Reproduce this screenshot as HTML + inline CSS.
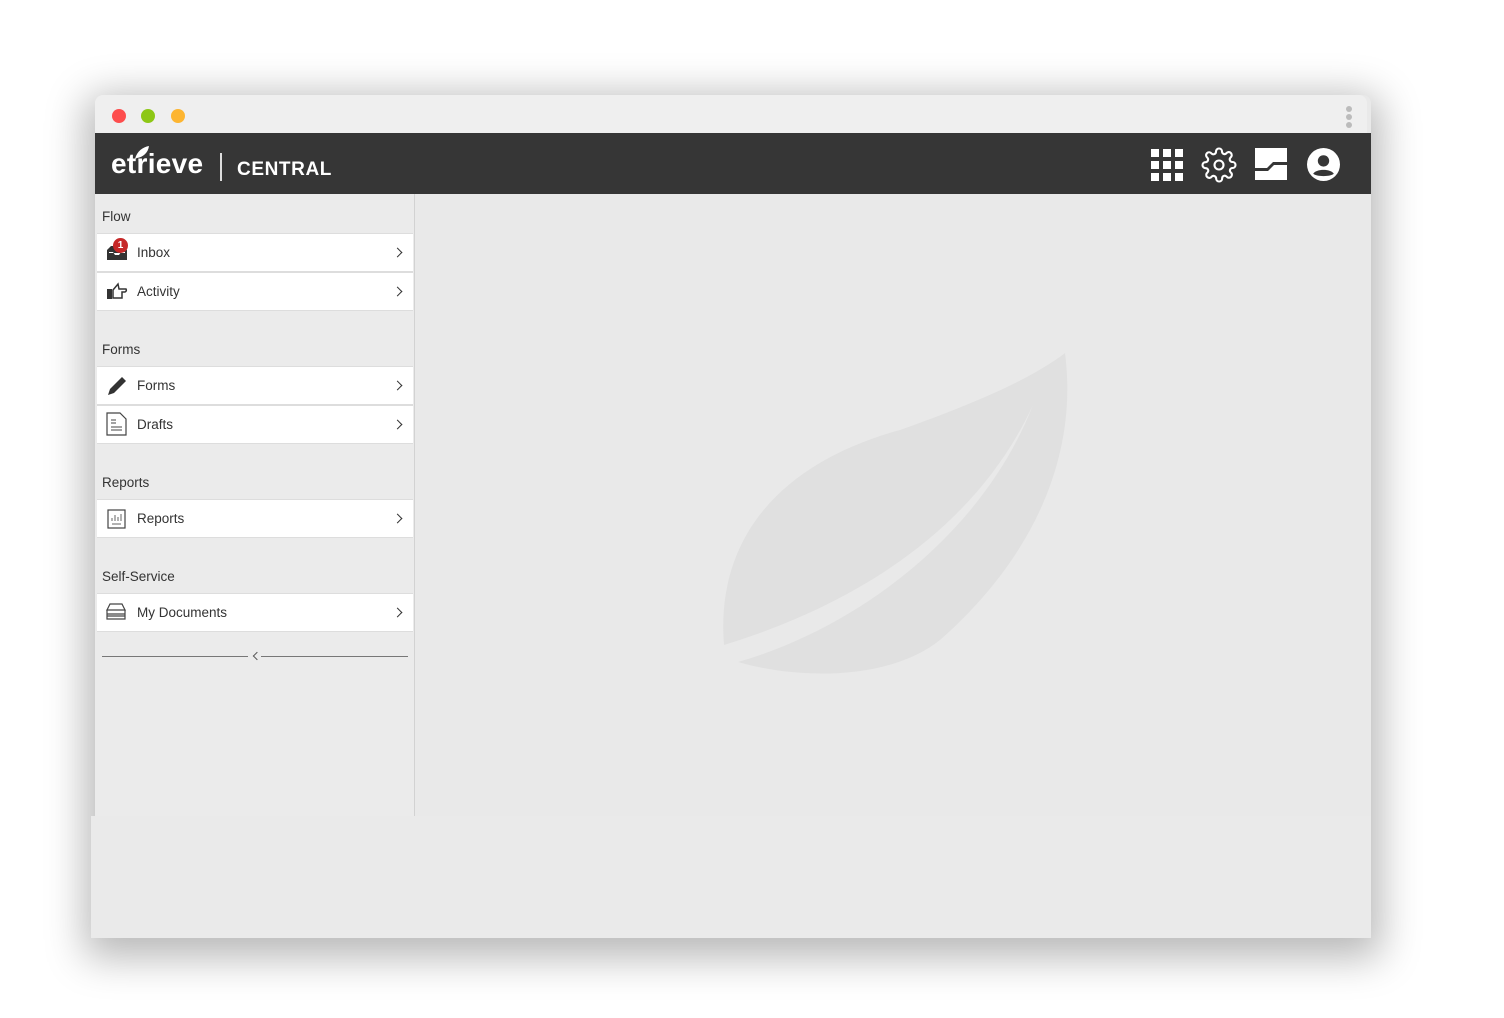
<!DOCTYPE html>
<html><head><meta charset="utf-8"><style>
*{margin:0;padding:0;box-sizing:border-box}
body{width:1504px;height:1018px;background:#fff;position:relative;overflow:hidden;font-family:"Liberation Sans",Arial,sans-serif}
.win{position:absolute;left:95px;top:95px;width:1276px;height:843px;box-shadow:0 10px 40px 10px rgba(0,0,0,.28);border-radius:8px 8px 0 0;background:#e9e9e9}
.bot{position:absolute;left:91px;top:816px;width:1280px;height:122px;background:#eaeaea}
.title{position:absolute;left:95px;top:95px;width:1272px;height:38px;background:#efefef;border-radius:8px 8px 0 0}
.dot{position:absolute;top:109px;width:14px;height:14px;border-radius:50%}
.hdr{position:absolute;left:95px;top:133px;width:1276px;height:61px;background:#363636;color:#fff}
.side{position:absolute;left:95px;top:194px;width:320px;height:622px;background:#ebebeb;border-right:1px solid #d2d2d2}
.sec{position:absolute;left:102px;font-size:13.5px;color:#333}
.row{position:absolute;left:97px;width:316px;height:39px;background:#fff;border-top:1px solid #ddd;border-bottom:1px solid #ddd}
.row span{position:absolute;left:40px;top:11px;font-size:13.5px;color:#333}
.row .ch{position:absolute;right:12px;top:15px;width:7px;height:7px;border-right:1.6px solid #333;border-top:1.6px solid #333;transform:rotate(45deg)}
.row svg{position:absolute;left:9px;top:8px}
</style></head><body>
<div class="win"></div>
<div class="bot"></div>
<div class="title"></div>
<div class="dot" style="left:112px;background:#fd4d4d"></div>
<div class="dot" style="left:141px;background:#8dc715"></div>
<div class="dot" style="left:171px;background:#fdb531"></div>
<div style="position:absolute;left:1346px;top:106px;width:6px;height:22px">
<div style="width:6px;height:6px;border-radius:50%;background:#bbb;margin-bottom:2px"></div><div style="width:6px;height:6px;border-radius:50%;background:#bbb;margin-bottom:2px"></div><div style="width:6px;height:6px;border-radius:50%;background:#bbb"></div></div>
<div class="hdr">
<div style="position:absolute;left:16px;top:15px;font-size:28px;font-weight:bold;letter-spacing:0.3px">etrieve</div>
<svg style="position:absolute;left:38px;top:12px" width="18" height="16"><path d="M2 14C4 6 10 2 16 1C15 8 10 12 4 13Z" fill="#fff"/></svg>
<div style="position:absolute;left:125px;top:20px;width:1.5px;height:28px;background:#ddd"></div>
<div style="position:absolute;left:142px;top:26px;font-size:19px;letter-spacing:0.6px;font-weight:bold">CENTRAL</div>
<svg style="position:absolute;left:1056px;top:16px" width="32" height="32" fill="#fff"><rect x="0" y="0" width="8" height="8"/><rect x="12" y="0" width="8" height="8"/><rect x="24" y="0" width="8" height="8"/><rect x="0" y="12" width="8" height="8"/><rect x="12" y="12" width="8" height="8"/><rect x="24" y="12" width="8" height="8"/><rect x="0" y="24" width="8" height="8"/><rect x="12" y="24" width="8" height="8"/><rect x="24" y="24" width="8" height="8"/></svg>
<svg style="position:absolute;left:1106px;top:14px" width="36" height="36" viewBox="0 0 24 24" fill="none" stroke="#fff" stroke-width="1.4"><circle cx="12" cy="12" r="3"/><path d="M19.4 15a1.7 1.7 0 0 0 .3 1.8l.1.1a2 2 0 1 1-2.8 2.8l-.1-.1a1.7 1.7 0 0 0-1.8-.3 1.7 1.7 0 0 0-1 1.5V21a2 2 0 1 1-4 0v-.1a1.7 1.7 0 0 0-1.1-1.5 1.7 1.7 0 0 0-1.8.3l-.1.1a2 2 0 1 1-2.8-2.8l.1-.1a1.7 1.7 0 0 0 .3-1.8 1.7 1.7 0 0 0-1.5-1H3a2 2 0 1 1 0-4h.1a1.7 1.7 0 0 0 1.5-1.1 1.7 1.7 0 0 0-.3-1.8l-.1-.1a2 2 0 1 1 2.8-2.8l.1.1a1.7 1.7 0 0 0 1.8.3H9a1.7 1.7 0 0 0 1-1.5V3a2 2 0 1 1 4 0v.1a1.7 1.7 0 0 0 1 1.5 1.7 1.7 0 0 0 1.8-.3l.1-.1a2 2 0 1 1 2.8 2.8l-.1.1a1.7 1.7 0 0 0-.3 1.8V9a1.7 1.7 0 0 0 1.5 1H21a2 2 0 1 1 0 4h-.1a1.7 1.7 0 0 0-1.5 1z"/></svg>
<svg style="position:absolute;left:1160px;top:15px" width="32" height="32"><path d="M0 0H32V14H18L12 20H0Z" fill="#fff"/><path d="M0 23H13L19 17H32V32H0Z" fill="#fff"/></svg>
<svg style="position:absolute;left:1212px;top:15px" width="33" height="33" viewBox="0 0 32 32"><circle cx="16" cy="16" r="16" fill="#fff"/><circle cx="16" cy="12.5" r="5.5" fill="#363636"/><path d="M6 25C9 20 23 20 26 25C23 28 9 28 6 25Z" fill="#363636"/></svg>
</div>
<div class="side"></div>
<div class="sec" style="top:209px">Flow</div>
<div class="row" style="top:233px"><svg width="22" height="20"><path d="M1 8L5 4H17L21 8V18H1Z" fill="#333"/><path d="M3 10H7L9 13H13L15 10H19V11H3Z" fill="#fff"/></svg><div style="position:absolute;left:16px;top:4px;width:15px;height:15px;border-radius:50%;background:#c62828;color:#fff;font-size:10px;text-align:center;line-height:15px;font-weight:bold">1</div><span>Inbox</span><i class="ch"></i></div>
<div class="row" style="top:272px"><svg width="22" height="20"><rect x="1" y="8" width="5" height="10" fill="#333"/><path d="M7 9L12 3L13 8H20Q21 10 19 11H16V17H7Z" fill="none" stroke="#333" stroke-width="1.5"/></svg><span>Activity</span><i class="ch"></i></div>
<div class="sec" style="top:342px">Forms</div>
<div class="row" style="top:366px"><svg width="22" height="22"><path d="M2 20L4 14L16 2L20 6L8 18Z" fill="#333"/></svg><span>Forms</span><i class="ch"></i></div>
<div class="row" style="top:405px"><svg width="22" height="24" style="top:6px"><path d="M1 1H14L20 7V23H1Z" fill="none" stroke="#444" stroke-width="1.2"/><path d="M5 8H10M5 11H10M5 15H16M5 18H16" stroke="#444"/></svg><span>Drafts</span><i class="ch"></i></div>
<div class="sec" style="top:475px">Reports</div>
<div class="row" style="top:499px"><svg width="22" height="22"><rect x="2" y="2" width="17" height="18" fill="none" stroke="#444" stroke-width="1.2"/><path d="M6 13V10M9 13V7M12 13V9M15 13V6M6 16H15" stroke="#666"/></svg><span>Reports</span><i class="ch"></i></div>
<div class="sec" style="top:569px">Self-Service</div>
<div class="row" style="top:593px"><svg width="22" height="20"><path d="M4 2H16L19 8H1Z M1 8H19V12H1Z M1 12H19V17H1Z M1 14H19" fill="none" stroke="#444" stroke-width="1.2"/></svg><span>My Documents</span><i class="ch"></i></div>
<div style="position:absolute;left:102px;top:656px;width:146px;height:1px;background:#777"></div>
<div style="position:absolute;left:261px;top:656px;width:147px;height:1px;background:#777"></div>
<div style="position:absolute;left:254px;top:653px;width:6px;height:6px;border-left:1.4px solid #555;border-bottom:1.4px solid #555;transform:rotate(45deg)"></div>
<svg style="position:absolute;left:720px;top:350px" width="350" height="330"><path d="M4 295C-5 180 70 110 180 80C250 55 310 30 345 3C360 120 300 220 220 290C170 330 80 330 18 312C130 280 260 190 313 55C260 170 150 250 4 295Z" fill="#e0e0e0"/></svg>
</body></html>
